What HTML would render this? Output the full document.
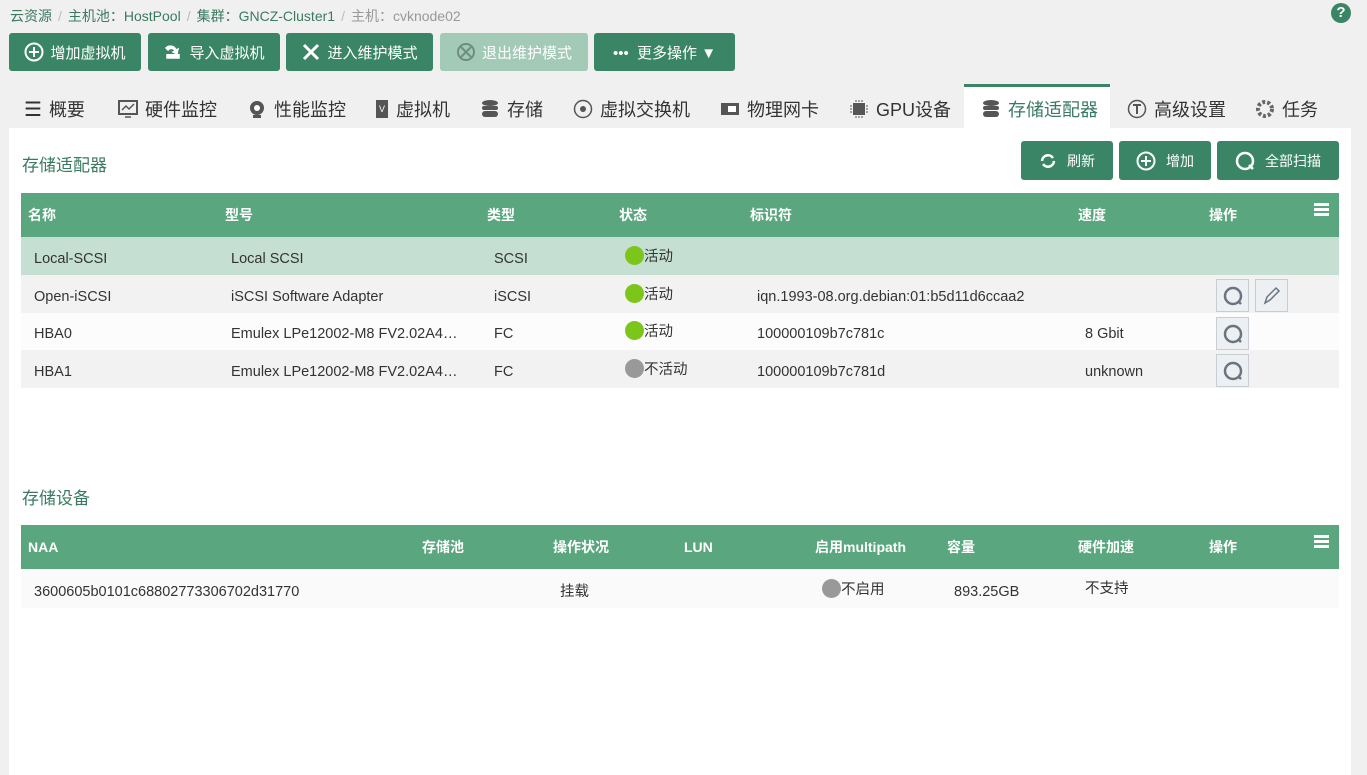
<!DOCTYPE html><html><head><meta charset="utf-8"><style>
*{box-sizing:border-box;margin:0;padding:0}
body{width:1367px;height:775px;background:#f0f0f0;font-family:"Liberation Sans","Noto Sans CJK SC",sans-serif;position:relative;overflow:hidden;color:#333}
.a{position:absolute}
.bc{left:10px;top:6px;font-size:14px;color:#3b7a5f}
.bc span.s{color:#bbb;margin:0 6px}
.bc .g{color:#999}
.btn{position:absolute;top:33px;height:38px;background:#3a8566;border-radius:3px;color:#fff;font-size:15px;display:flex;align-items:center;justify-content:center;gap:6px}
.tab{position:absolute;top:88px;height:42px;font-size:18px;color:#333;display:flex;align-items:center;gap:7px}
.panel{left:9px;top:128px;width:1342px;height:647px;background:#fff}
.th{position:absolute;left:21px;width:1318px;height:44px;background:#5aa67e;color:#fff;font-size:14px;font-weight:bold}
.th span,.tr span{position:absolute;top:0}
.th span{line-height:44px}
.tr{position:absolute;left:21px;width:1318px;font-size:14.5px;color:#333}
.dot{display:inline-block;width:19px;height:19px;border-radius:50%;vertical-align:-4px}
.ib{position:absolute;width:33px;height:33px;border:1px solid #c8cdd3;background:#edf0f3;display:flex;align-items:center;justify-content:center}
.sb{position:absolute;top:141px;height:39px;background:#3a8566;border-radius:3px;color:#fff;font-size:14px;display:flex;align-items:center;justify-content:center;gap:10px}
.ham{position:absolute;right:10px;top:10px;width:15px}
.ham i{display:block;height:3px;background:#fff;margin-bottom:2px}
</style></head><body>
<div class="a bc">云资源<span class="s">/</span>主机池：HostPool<span class="s">/</span>集群：GNCZ-Cluster1<span class="s">/</span><span class="g">主机：cvknode02</span></div>
<div class="a" style="left:1331px;top:3px;width:20px;height:20px;border-radius:50%;background:#3a8566;color:#fff;font-weight:bold;font-size:15px;text-align:center;line-height:20px">?</div>
<div class="btn" style="left:9px;width:132px"><svg width="20" height="20"><circle cx="10" cy="10" r="8.5" fill="none" stroke="#fff" stroke-width="2"/><path d="M10 5v10M5 10h10" stroke="#fff" stroke-width="2"/></svg>增加虚拟机</div>
<div class="btn" style="left:148px;width:132px"><svg width="20" height="20"><path d="M3 6a6 6 0 0 1 10 2l2-1-1 5-4-2 2-1a4 4 0 0 0-7-1z M4 12v4h12v-4" fill="#fff" stroke="#fff" stroke-width="1.5"/></svg>导入虚拟机</div>
<div class="btn" style="left:286px;width:147px"><svg width="20" height="20"><path d="M3 3l14 14M17 3L3 17" stroke="#fff" stroke-width="3"/></svg>进入维护模式</div>
<div class="btn" style="left:440px;width:148px;background:#a3c9b7"><svg width="20" height="20"><circle cx="10" cy="10" r="8" fill="none" stroke="#6e8f80" stroke-width="2"/><path d="M5 5l10 10M15 5L5 15" stroke="#6e8f80" stroke-width="2"/></svg>退出维护模式</div>
<div class="btn" style="left:594px;width:141px">•••&nbsp; 更多操作 ▼</div>

<div class="tab" style="left:24px"><span style="font-size:20px">☰</span>概要</div>
<div class="tab" style="left:118px"><svg width="20" height="20"><rect x="1" y="2" width="18" height="13" fill="none" stroke="#555" stroke-width="2"/><path d="M7 18h6M4 11l4-4 3 3 5-5" stroke="#555" stroke-width="1.5" fill="none"/></svg>硬件监控</div>
<div class="tab" style="left:247px"><svg width="20" height="20"><circle cx="10" cy="9" r="7" fill="#555"/><circle cx="10" cy="9" r="3" fill="#fff"/><rect x="6" y="16" width="8" height="3" fill="#555"/></svg>性能监控</div>
<div class="tab" style="left:375px"><svg width="14" height="20"><rect x="1" y="1" width="12" height="18" fill="#555"/><text x="7" y="13" font-size="9" fill="#fff" text-anchor="middle">V</text></svg>虚拟机</div>
<div class="tab" style="left:480px"><svg width="20" height="20"><ellipse cx="10" cy="4" rx="8" ry="3" fill="#555"/><rect x="2" y="7" width="16" height="4" rx="2" fill="#555"/><rect x="2" y="12" width="16" height="6" rx="3" fill="#555"/></svg>存储</div>
<div class="tab" style="left:573px"><svg width="20" height="20"><circle cx="10" cy="10" r="8.5" fill="none" stroke="#555" stroke-width="1.5"/><circle cx="10" cy="10" r="3" fill="#555"/></svg>虚拟交换机</div>
<div class="tab" style="left:720px"><svg width="20" height="20"><rect x="1" y="4" width="18" height="12" fill="#555"/><rect x="8" y="7" width="8" height="6" fill="#fff"/></svg>物理网卡</div>
<div class="tab" style="left:849px"><svg width="20" height="20"><rect x="4" y="4" width="12" height="12" fill="#555"/><path d="M7 1v18M10 1v18M13 1v18M1 7h18M1 10h18M1 13h18" stroke="#555" stroke-dasharray="2 2"/></svg>GPU设备</div>
<div class="a" style="left:964px;top:84px;width:146px;height:44px;background:#fff;border-top:3px solid #3a8566"></div>
<div class="tab" style="left:981px;color:#3a7a60"><svg width="20" height="20"><ellipse cx="10" cy="4" rx="8" ry="3" fill="#555"/><rect x="2" y="7" width="16" height="4" rx="2" fill="#555"/><rect x="2" y="12" width="16" height="6" rx="3" fill="#555"/></svg>存储适配器</div>
<div class="tab" style="left:1127px"><svg width="20" height="20"><circle cx="10" cy="10" r="8.5" fill="none" stroke="#555" stroke-width="1.5"/><path d="M6 6h8M10 7v8" stroke="#555" stroke-width="2"/></svg>高级设置</div>
<div class="tab" style="left:1255px"><svg width="20" height="20"><circle cx="10" cy="10" r="7" fill="none" stroke="#666" stroke-width="4" stroke-dasharray="3 2"/></svg>任务</div>

<div class="a panel"></div>
<div class="a" style="left:22px;top:151px;font-size:17px;color:#3a7a60">存储适配器</div>
<div class="sb" style="left:1021px;width:92px"><svg width="18" height="18"><path d="M3 9a6 6 0 0 1 11-3M15 9a6 6 0 0 1-11 3" stroke="#fff" stroke-width="2.5" fill="none"/></svg>刷新</div>
<div class="sb" style="left:1119px;width:92px"><svg width="20" height="20"><circle cx="10" cy="10" r="8.5" fill="none" stroke="#fff" stroke-width="2"/><path d="M10 5v10M5 10h10" stroke="#fff" stroke-width="2"/></svg>增加</div>
<div class="sb" style="left:1217px;width:122px"><svg width="20" height="20"><circle cx="10" cy="10" r="8" fill="none" stroke="#fff" stroke-width="2.5"/><path d="M14 14l4 4" stroke="#fff" stroke-width="2.5"/></svg>全部扫描</div>

<div class="th" style="top:193px"><span style="left:7px">名称</span><span style="left:204px">型号</span><span style="left:466px">类型</span><span style="left:598px">状态</span><span style="left:729px">标识符</span><span style="left:1057px">速度</span><span style="left:1188px">操作</span><div class="ham"><i></i><i></i><i></i></div></div>
<div class="tr" style="top:237px;height:38px;background:#c5e0d3;line-height:44px"><span style="left:13px">Local-SCSI</span><span style="left:210px">Local SCSI</span><span style="left:473px">SCSI</span><span style="left:604px;line-height:40px"><i class="dot" style="background:#7cc61c"></i>活动</span></div>
<div class="tr" style="top:275px;height:38px;background:#f2f2f2;line-height:44px"><span style="left:13px">Open-iSCSI</span><span style="left:210px">iSCSI Software Adapter</span><span style="left:473px">iSCSI</span><span style="left:604px;line-height:40px"><i class="dot" style="background:#7cc61c"></i>活动</span><span style="left:736px">iqn.1993-08.org.debian:01:b5d11d6ccaa2</span></div>
<div class="tr" style="top:313px;height:37px;background:#fcfcfc;line-height:43px"><span style="left:13px">HBA0</span><span style="left:210px">Emulex LPe12002-M8 FV2.02A4…</span><span style="left:473px">FC</span><span style="left:604px;line-height:39px"><i class="dot" style="background:#7cc61c"></i>活动</span><span style="left:736px">100000109b7c781c</span><span style="left:1064px">8 Gbit</span></div>
<div class="tr" style="top:350px;height:38px;background:#f2f2f2;line-height:44px"><span style="left:13px">HBA1</span><span style="left:210px">Emulex LPe12002-M8 FV2.02A4…</span><span style="left:473px">FC</span><span style="left:604px;line-height:40px"><i class="dot" style="background:#999"></i>不活动</span><span style="left:736px">100000109b7c781d</span><span style="left:1064px">unknown</span></div>
<div class="ib" style="left:1216px;top:279px"><svg width="22" height="22"><circle cx="11" cy="11" r="8" fill="none" stroke="#6b7480" stroke-width="2.5"/><path d="M16 16l3 3" stroke="#6b7480" stroke-width="2.5"/></svg></div>
<div class="ib" style="left:1255px;top:279px"><svg width="22" height="22"><path d="M4 18l2-6L15 3l3 3-9 9z" fill="none" stroke="#6b7480" stroke-width="1.5"/></svg></div>
<div class="ib" style="left:1216px;top:317px"><svg width="22" height="22"><circle cx="11" cy="11" r="8" fill="none" stroke="#6b7480" stroke-width="2.5"/><path d="M16 16l3 3" stroke="#6b7480" stroke-width="2.5"/></svg></div>
<div class="ib" style="left:1216px;top:354px"><svg width="22" height="22"><circle cx="11" cy="11" r="8" fill="none" stroke="#6b7480" stroke-width="2.5"/><path d="M16 16l3 3" stroke="#6b7480" stroke-width="2.5"/></svg></div>

<div class="a" style="left:22px;top:484px;font-size:17px;color:#3a7a60">存储设备</div>
<div class="th" style="top:525px"><span style="left:7px">NAA</span><span style="left:401px">存储池</span><span style="left:532px">操作状况</span><span style="left:663px">LUN</span><span style="left:794px">启用multipath</span><span style="left:926px">容量</span><span style="left:1057px">硬件加速</span><span style="left:1188px">操作</span><div class="ham"><i></i><i></i><i></i></div></div>
<div class="tr" style="top:569px;height:39px;background:#fafafa;line-height:46px"><span style="left:13px">3600605b0101c68802773306702d31770</span><span style="left:539px">挂载</span><span style="left:801px;line-height:42px"><i class="dot" style="background:#999"></i>不启用</span><span style="left:933px">893.25GB</span><span style="left:1064px;line-height:40px">不支持</span></div>
</body></html>
